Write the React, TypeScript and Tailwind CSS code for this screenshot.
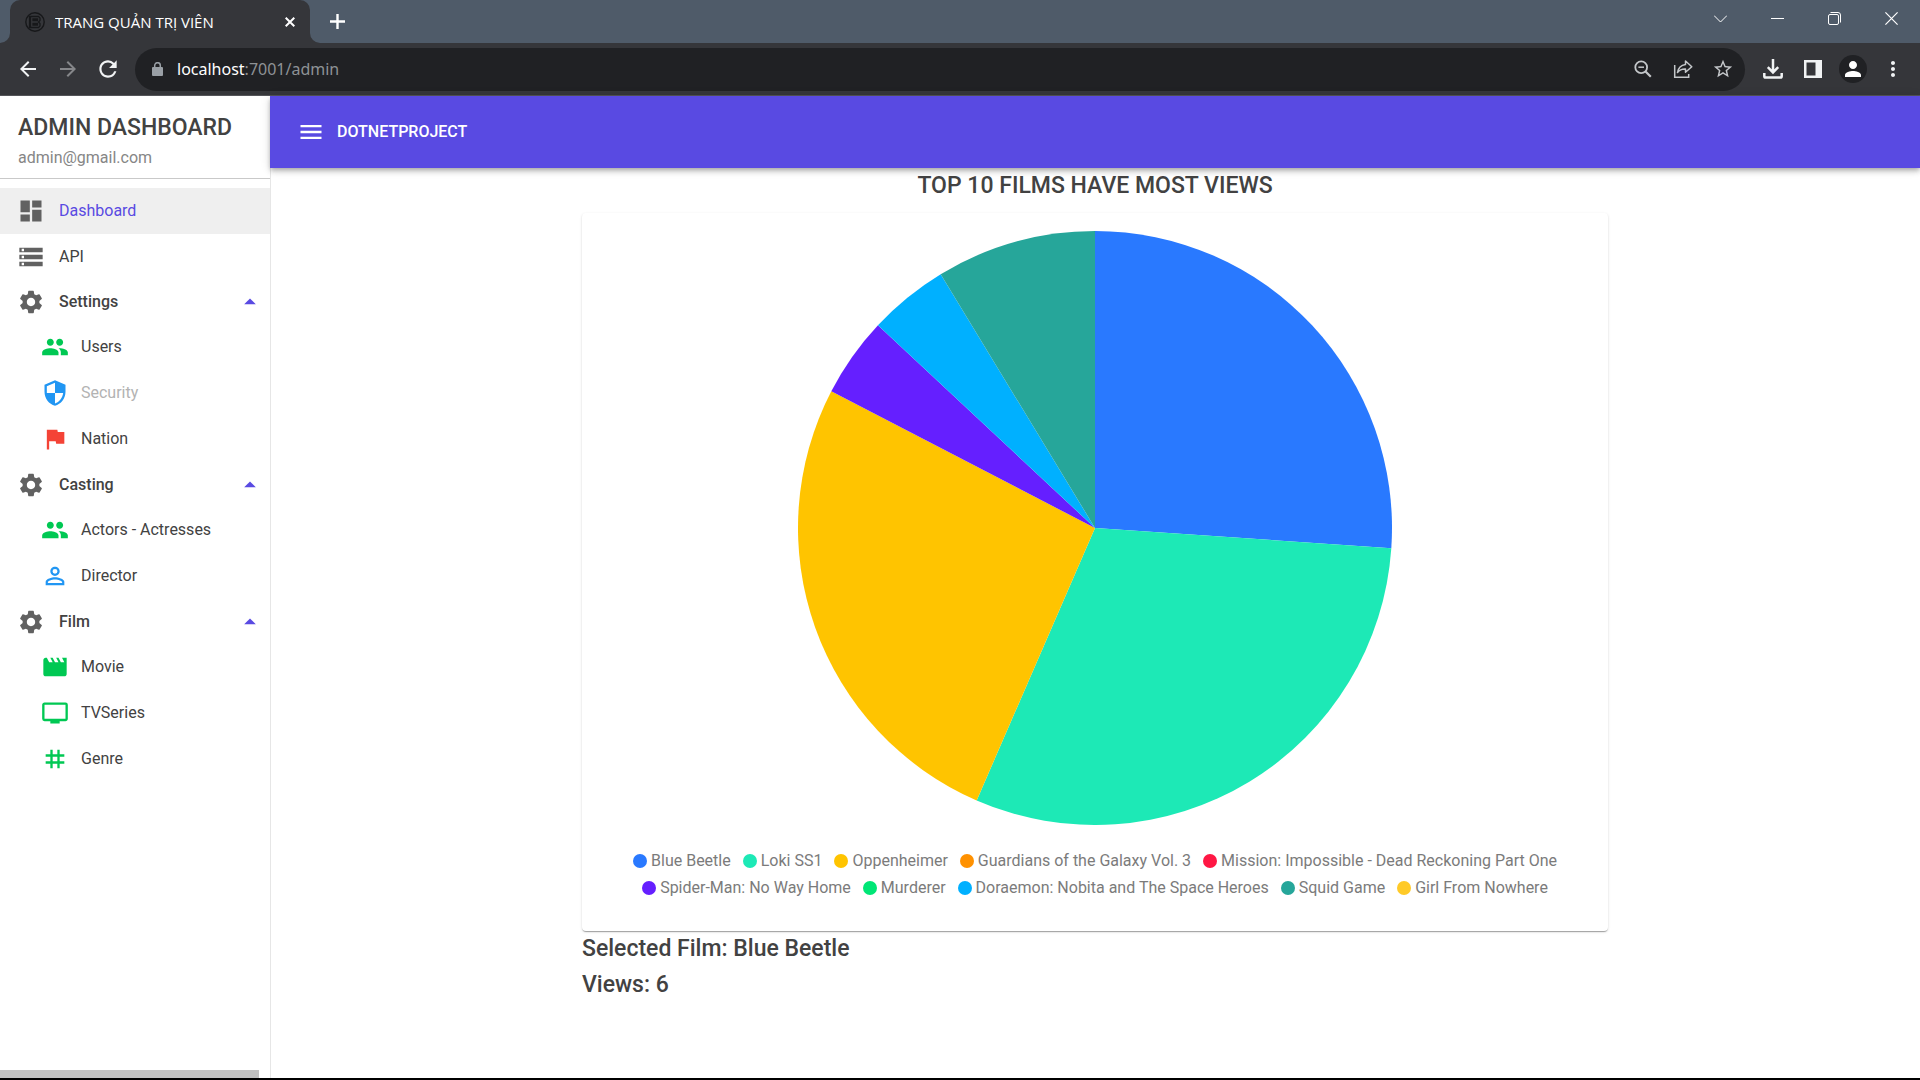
import React from "react";
import type { ReactNode } from "react";
import type { IconType } from "react-icons";
import {
  MdArrowBack,
  MdArrowDropUp,
  MdArrowForward,
  MdDashboard,
  MdFlag,
  MdMenu,
  MdMoreVert,
  MdMovie,
  MdPeople,
  MdPerson,
  MdPersonOutline,
  MdPersonalVideo,
  MdRefresh,
  MdSecurity,
  MdSettings,
  MdStarBorder,
  MdStorage,
  MdTag,
} from "react-icons/md";

type Film = { name: string; views: number; color: string };

const films: Film[] = [
  { name: "Blue Beetle", views: 6, color: "#2979ff" },
  { name: "Loki SS1", views: 7, color: "#1de9b6" },
  { name: "Oppenheimer", views: 6, color: "#ffc400" },
  { name: "Guardians of the Galaxy Vol. 3", views: 0, color: "#ff9100" },
  { name: "Mission: Impossible - Dead Reckoning Part One", views: 0, color: "#ff1744" },
  { name: "Spider-Man: No Way Home", views: 1, color: "#651fff" },
  { name: "Murderer", views: 0, color: "#00e676" },
  { name: "Doraemon: Nobita and The Space Heroes", views: 1, color: "#00b0ff" },
  { name: "Squid Game", views: 2, color: "#26a69a" },
  { name: "Girl From Nowhere", views: 0, color: "#ffca28" },
];

type Item = { label: string; icon: IconType; tone: string; disabled?: boolean };
type Group = { label: string; items: Item[] };

const groups: Group[] = [
  {
    label: "Settings",
    items: [
      { label: "Users", icon: MdPeople, tone: "text-[#00c853]" },
      { label: "Security", icon: MdSecurity, tone: "text-[#2196f3]", disabled: true },
      { label: "Nation", icon: MdFlag, tone: "text-[#f44336]" },
    ],
  },
  {
    label: "Casting",
    items: [
      { label: "Actors - Actresses", icon: MdPeople, tone: "text-[#00c853]" },
      { label: "Director", icon: MdPersonOutline, tone: "text-[#2196f3]" },
    ],
  },
  {
    label: "Film",
    items: [
      { label: "Movie", icon: MdMovie, tone: "text-[#00c853]" },
      { label: "TVSeries", icon: MdPersonalVideo, tone: "text-[#00c853]" },
      { label: "Genre", icon: MdTag, tone: "text-[#00c853]" },
    ],
  },
];

function ChromeButton({ label, children, wide }: { label: string; children: ReactNode; wide?: boolean }) {
  return (
    <button
      type="button"
      aria-label={label}
      className={`flex h-9 shrink-0 items-center justify-center ${wide ? "w-[57px]" : "w-10"}`}
    >
      {children}
    </button>
  );
}

function TabStrip() {
  return (
    <div className="flex h-[43px] items-start bg-[#4f5b69] text-white">
      <svg className="h-[10px] w-[10px] self-end" viewBox="0 0 10 10" aria-hidden="true">
        <path d="M10 0v10H0A10 10 0 0 0 10 0z" fill="#35363a" />
      </svg>
      <div className="flex h-full w-[300px] items-center rounded-t-[10px] bg-[#35363a] pr-[10px] pl-[15px]">
        <svg className="h-5 w-5" viewBox="0 0 20 20" fill="none" stroke="#17181a" aria-hidden="true">
          <circle cx="10" cy="10" r="9.2" strokeWidth="1.4" />
          <path d="M5.5 4.5h8l1.5 1.5v2.5L13.5 10l1.5 1.500V14l-1.500 1.500h-8zM8 7h4.500v1.500H8zM8 11.500h4.500V13H8zM4.500 4v12" strokeWidth="1.300" />
        </svg>
        <span className="ml-[10px] flex-1 truncate font-['Open_Sans','Noto_Sans',sans-serif] text-[15px] leading-5">
          TRANG QUẢN TRỊ VIÊN
        </span>
        <button type="button" aria-label="Close tab" className="flex h-5 w-5 items-center justify-center">
          <svg className="h-[10px] w-[10px]" viewBox="0 0 10 10" stroke="currentColor" strokeWidth="2">
            <path d="M.7.7l8.600 8.600M9.300.7L.7 9.300" />
          </svg>
        </button>
      </div>
      <svg className="h-[10px] w-[10px] self-end" viewBox="0 0 10 10" aria-hidden="true">
        <path d="M0 0v10h10A10 10 0 0 1 0 0z" fill="#35363a" />
      </svg>
      <button type="button" aria-label="New tab" className="flex h-[43px] w-[34px] items-center justify-center">
        <svg className="h-[15px] w-[15px]" viewBox="0 0 15 15" stroke="currentColor" strokeWidth="2.400">
          <path d="M7.500 0v15M0 7.500h15" />
        </svg>
      </button>
      <div className="ml-auto flex">
        <ChromeButton label="Search tabs" wide>
          <svg className="h-[13px] w-[13px]" viewBox="0 0 13 13" fill="none" stroke="currentColor">
            <path d="M0 3.500L6.500 10 13 3.500" />
          </svg>
        </ChromeButton>
        <ChromeButton label="Minimize" wide>
          <svg className="h-[13px] w-[13px]" viewBox="0 0 13 13" stroke="currentColor">
            <path d="M0 6.500h13" />
          </svg>
        </ChromeButton>
        <ChromeButton label="Restore" wide>
          <svg className="h-[13px] w-[13px]" viewBox="0 0 13 13" fill="none" stroke="currentColor">
            <rect x=".5" y="2.500" width="10" height="10" rx="1.500" />
            <path d="M2.500.5h7.500a2.500 2.500 0 0 1 2.500 2.500v7.500" />
          </svg>
        </ChromeButton>
        <ChromeButton label="Close window" wide>
          <svg className="h-[13px] w-[13px]" viewBox="0 0 13 13" stroke="currentColor" strokeWidth="1.200">
            <path d="M.4.4l12.200 12.200M12.600.4L.4 12.600" />
          </svg>
        </ChromeButton>
      </div>
    </div>
  );
}

function Toolbar() {
  return (
    <div className="flex h-[53px] items-center border-b border-[#545559] bg-[#35363a] pr-[7px] pl-2 text-[#f1f3f4]">
      <ChromeButton label="Back">
        <MdArrowBack size={24} />
      </ChromeButton>
      <ChromeButton label="Forward">
        <MdArrowForward size={24} className="text-[#86878a]" />
      </ChromeButton>
      <ChromeButton label="Reload">
        <MdRefresh size={26} />
      </ChromeButton>
      <div className="mr-2 ml-[7px] flex h-[43px] flex-1 items-center rounded-full bg-[#202124] pr-[2px] pl-[17px]">
        <svg className="h-[14px] w-[11px]" viewBox="0 0 11 14" aria-hidden="true">
          <rect y="5" width="11" height="9" rx="1" fill="#9aa0a6" />
          <path d="M2.700 6V3.500a2.800 2.800 0 0 1 5.600 0V6" fill="none" stroke="#9aa0a6" strokeWidth="1.500" />
        </svg>
        <a
          href="#admin"
          className="ml-[14px] flex-1 font-['Noto_Sans','Open_Sans',sans-serif] text-[16px] leading-6 text-[#8e9296]"
        >
          <span className="text-white">localhost</span>:7001/admin
        </a>
        <div className="flex text-[#c4c7ca]">
          <ChromeButton label="Zoom">
            <svg className="h-[18px] w-[18px]" viewBox="0 0 18 18" fill="none" stroke="currentColor" strokeWidth="1.800">
              <circle cx="7.200" cy="7.200" r="5.900" />
              <path d="M4.400 7.200h5.600" strokeWidth="1.500" />
              <path d="M11.500 11.500l5.300 5.300" strokeWidth="2.200" />
            </svg>
          </ChromeButton>
          <ChromeButton label="Share">
            <svg className="h-5 w-5" viewBox="0 0 20 20" fill="none" stroke="currentColor" strokeWidth="1.500">
              <path d="M1.700 6v12.200h14V15" />
              <path d="M12.500 2l6.300 5.700-6.300 5.600v-3.400c-3.500-.2-6 .9-8 3.600.7-4.300 3.300-7.300 8-8z" strokeLinejoin="round" />
            </svg>
          </ChromeButton>
          <ChromeButton label="Bookmark">
            <MdStarBorder size={22} />
          </ChromeButton>
        </div>
      </div>
      <ChromeButton label="Downloads">
        <svg className="h-5 w-5" viewBox="0 0 20 20" fill="none" stroke="currentColor" strokeWidth="2.500">
          <path d="M10 0v13M4.800 8.200L10 13.400l5.200-5.200" />
          <path d="M1.300 14v3.200c0 .8.6 1.300 1.300 1.300h14.800c.8 0 1.300-.6 1.300-1.300V14" />
        </svg>
      </ChromeButton>
      <ChromeButton label="Side panel">
        <svg className="h-[18px] w-[18px]" viewBox="0 0 18 18" aria-hidden="true">
          <path d="M0 0h18v18H0zM2.500 2.500v13h9v-13z" fill="currentColor" fillRule="evenodd" />
        </svg>
      </ChromeButton>
      <ChromeButton label="Profile">
        <span className="flex h-7 w-7 items-center justify-center rounded-full bg-[#202124]">
          <MdPerson size={24} className="text-white" />
        </span>
      </ChromeButton>
      <ChromeButton label="Browser menu">
        <MdMoreVert size={24} />
      </ChromeButton>
    </div>
  );
}

function Sidebar() {
  return (
    <aside className="flex w-[271px] shrink-0 flex-col border-r border-[#e6e6e6]">
      <div className="border-b border-[#c9c9c9] pt-[14px] pb-[9px] pl-[18px]">
        <h1 className="text-[23px] leading-9 font-medium">ADMIN DASHBOARD</h1>
        <p className="text-[16px] leading-[23px] text-[#868686]">admin@gmail.com</p>
      </div>
      <nav aria-label="Admin" className="flex-1 pt-[9px] text-[16px]">
        <ul>
          <li>
            <a href="#dashboard" aria-current="page" className="flex h-[46px] items-center gap-[14px] bg-[#efefef] pl-[17px] text-[#594ae2]">
              <MdDashboard size={28} className="text-[#616161]" />
              Dashboard
            </a>
          </li>
          <li>
            <a href="#api" className="flex h-[45px] items-center gap-[14px] pl-[17px]">
              <MdStorage size={28} className="text-[#616161]" />
              API
            </a>
          </li>
          {groups.map((group) => (
            <li key={group.label}>
              <button type="button" aria-expanded="true" className="flex h-[45px] w-full items-center gap-[14px] pr-[6px] pl-[17px] text-left font-medium">
                <MdSettings size={28} className="text-[#616161]" />
                <span className="flex-1">{group.label}</span>
                <MdArrowDropUp size={28} className="text-[#594ae2]" />
              </button>
              <ul>
                {group.items.map(({ label, icon: Icon, tone, disabled }) => (
                  <li key={label}>
                    <a
                      href={disabled ? undefined : `#${label.toLowerCase()}`}
                      aria-disabled={disabled}
                      className={`flex h-[46px] items-center gap-3 pl-[41px] ${disabled ? "text-[#b3b3b3]" : ""}`}
                    >
                      <Icon size={28} className={tone} />
                      {label}
                    </a>
                  </li>
                ))}
              </ul>
            </li>
          ))}
        </ul>
      </nav>
      <div className="h-2 w-[259px] bg-[#c1c1c1]" />
    </aside>
  );
}

function PieChart() {
  const total = films.reduce((sum, film) => sum + film.views, 0);
  const point = (views: number) => {
    const angle = (views / total) * Math.PI * 2;
    return `${100 + 100 * Math.sin(angle)} ${100 - 100 * Math.cos(angle)}`;
  };
  let passed = 0;
  return (
    <svg viewBox="0 0 200 200" className="mx-auto w-full max-w-[594px]" role="img" aria-label="Views per film">
      {films
        .filter((film) => film.views > 0)
        .map((film) => {
          const from = point(passed);
          passed += film.views;
          return <path key={film.name} d={`M100 100L${from}A100 100 0 0 1 ${point(passed)}z`} fill={film.color} />;
        })}
    </svg>
  );
}

export default function App() {
  const selected = films[0];
  return (
    <div className="flex min-h-screen flex-col border-b-2 border-black bg-white font-[Roboto,sans-serif] text-[#424242]">
      <TabStrip />
      <Toolbar />
      <div className="flex flex-1">
        <Sidebar />
        <div className="-ml-px min-w-0 flex-1">
          <header className="relative flex h-[72px] items-center gap-3 bg-[#594ae2] px-[27px] text-white shadow-[0_2px_4px_-1px_rgba(0,0,0,0.2),0_4px_5px_0_rgba(0,0,0,0.14),0_1px_10px_0_rgba(0,0,0,0.12)]">
            <button type="button" aria-label="Toggle menu">
              <MdMenu size={28} />
            </button>
            <span className="text-[16px] font-medium">DOTNETPROJECT</span>
          </header>
          <main className="mx-auto max-w-[1026px] text-[23px] leading-9">
            <h2 className="pb-[9px] text-center font-medium">TOP 10 FILMS HAVE MOST VIEWS</h2>
            <section className="rounded bg-white px-4 pt-[18px] pb-[30px] shadow-[0_2px_1px_-1px_rgba(0,0,0,0.2),0_1px_1px_0_rgba(0,0,0,0.14),0_1px_3px_0_rgba(0,0,0,0.12)]">
              <PieChart />
              <ul className="mt-[22px] flex flex-wrap justify-center gap-x-3 px-6 text-[16px] leading-[27px] text-[#7b7b7b]">
                {films.map((film) => (
                  <li key={film.name} className="flex items-center gap-1">
                    <svg className="h-[14px] w-[14px]" viewBox="0 0 14 14" aria-hidden="true">
                      <circle cx="7" cy="7" r="7" fill={film.color} />
                    </svg>
                    {film.name}
                  </li>
                ))}
              </ul>
            </section>
            <p className="font-medium">Selected Film: {selected.name}</p>
            <p className="font-medium">Views: {selected.views}</p>
          </main>
        </div>
      </div>
    </div>
  );
}
